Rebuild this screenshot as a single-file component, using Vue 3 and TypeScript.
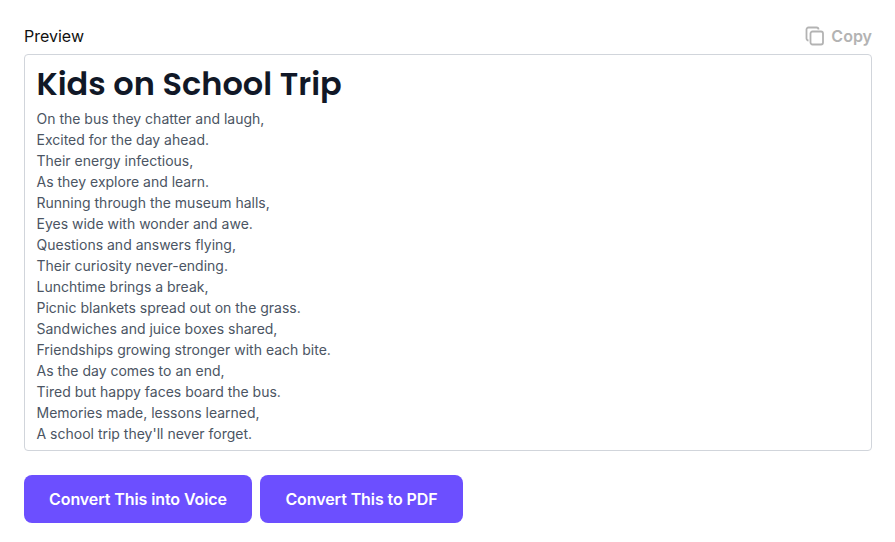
<script setup lang="ts">
const lines: string[] = [
  'On the bus they chatter and laugh,',
  'Excited for the day ahead.',
  'Their energy infectious,',
  'As they explore and learn.',
  'Running through the museum halls,',
  'Eyes wide with wonder and awe.',
  'Questions and answers flying,',
  'Their curiosity never-ending.',
  'Lunchtime brings a break,',
  'Picnic blankets spread out on the grass.',
  'Sandwiches and juice boxes shared,',
  'Friendships growing stronger with each bite.',
  'As the day comes to an end,',
  'Tired but happy faces board the bus.',
  'Memories made, lessons learned,',
  "A school trip they'll never forget.",
]
</script>

<template>
  <main class="page">
    <header class="head">
      <span class="label">Preview</span>
      <button class="copy" type="button">
        <svg width="20" height="20" viewBox="0 0 20 20" fill="none" stroke="#b3b3b3" stroke-width="1.8">
          <rect x="5.5" y="5.5" width="12.5" height="13" rx="2" />
          <path d="M3.5 14.5 A2 2 0 0 1 1.5 12.5 V3.5 A2 2 0 0 1 3.5 1.5 H11.5 A2 2 0 0 1 13.5 3.5" />
        </svg>
        <span>Copy</span>
      </button>
    </header>
    <section class="box">
      <h1>Kids on School Trip</h1>
      <p v-for="line in lines" :key="line">{{ line }}</p>
    </section>
    <div class="actions">
      <button class="primary" type="button">Convert This into Voice</button>
      <button class="primary" type="button">Convert This to PDF</button>
    </div>
  </main>
</template>

<style>
html, body { margin: 0; background: #fff; }
</style>

<style scoped>
.page {
  width: 895px;
  height: 542px;
  box-sizing: border-box;
  padding: 25px 23px 0 24px;
  font-family: Inter, "Liberation Sans", sans-serif;
}
.head {
  display: flex;
  justify-content: space-between;
  align-items: center;
  height: 22px;
  margin-bottom: 7px;
}
.label { font-size: 16px; color: #111; }
.copy {
  display: flex;
  align-items: center;
  gap: 6px;
  padding: 0;
  border: 0;
  background: none;
  color: #b3b3b3;
  font: 600 16px Inter, "Liberation Sans", sans-serif;
}
.box {
  box-sizing: border-box;
  height: 397px;
  border: 1px solid #d1d5db;
  border-radius: 4px;
  padding: 8px 12px 0 11.5px;
}
h1 {
  margin: 0 0 3px;
  font: 600 32px/42px Poppins, "Open Sans", sans-serif;
  color: #111827;
}
p {
  margin: 0;
  font-size: 14px;
  line-height: 21px;
  color: #4b5563;
}
.actions {
  display: flex;
  gap: 8px;
  margin-top: 24px;
}
.primary {
  width: 228px;
  height: 48px;
  padding: 0;
  border: 0;
  border-radius: 8px;
  background: #6c4fff;
  color: #fff;
  font: 600 16px Inter, "Liberation Sans", sans-serif;
  letter-spacing: -0.09px;
}
.primary + .primary { width: 203px; }
</style>
